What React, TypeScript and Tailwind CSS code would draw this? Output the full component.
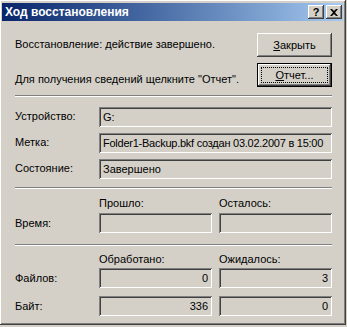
import React from 'react';

const raised =
  'shadow-[inset_-1px_-1px_#404040,inset_1px_1px_#ffffff,inset_-2px_-2px_#808080,inset_2px_2px_#d4d0c8]';
const sunken =
  'shadow-[inset_1px_1px_#808080,inset_-1px_-1px_#ffffff,inset_2px_2px_#404040,inset_-2px_-2px_#d4d0c8]';

const Field: React.FC<{ value?: string; right?: boolean; tight?: boolean }> = ({ value, right, tight }) => (
  <div
    className={`h-[20px] bg-[#d4d0c8] ${sunken} flex items-center px-[4px] leading-none whitespace-nowrap overflow-hidden ${
      right ? 'justify-end' : ''
    } ${tight ? 'tracking-[-0.25px]' : ''}`}
  >
    {value}
  </div>
);

const Separator: React.FC<{ className?: string }> = ({ className }) => (
  <div className={`h-[2px] border-t border-t-[#808080] border-b border-b-white ${className ?? ''}`} />
);

const TitleButton: React.FC<{ children: React.ReactNode }> = ({ children }) => (
  <div
    className={`w-[16px] h-[14px] bg-[#d4d0c8] ${raised} flex items-center justify-center text-black text-[11px] font-bold leading-none`}
  >
    {children}
  </div>
);

export default function App() {
  return (
    <div
      className="w-[347px] h-[327px] bg-[#d4d0c8] text-black text-[11px] overflow-hidden"
      style={{ fontFamily: '"Liberation Sans", Arial, sans-serif' }}
    >
      <div className={`w-[346px] h-[325px] pt-[3px] pl-[2px] pr-[3px] ${raised} flex flex-col`}>
        {/* Title bar */}
        <div className="h-[18px] bg-gradient-to-r from-[#0a246a] to-[#a6caf0] flex items-center justify-between pl-[3px] pr-[1px]">
          <span className="text-white font-bold text-[12px] leading-none">Ход восстановления</span>
          <div className="flex gap-[2px]">
            <TitleButton>?</TitleButton>
            <TitleButton>
              <svg width="8" height="7" viewBox="0 0 8 7">
                <path d="M0 0h2l2 2 2-2h2L5 3.5 8 7H6L4 5 2 7H0l3-3.5z" fill="#000" />
              </svg>
            </TitleButton>
          </div>
        </div>

        {/* Body */}
        <div className="pl-[13px] pr-[11px] flex flex-col">
          <div className="mt-[12px] grid grid-cols-[1fr_75px] grid-rows-[24px_24px] gap-y-[6px]">
            <div className="flex items-center pb-[2px]">Восстановление: действие завершено.</div>
            <button className={`h-[24px] bg-[#d4d0c8] ${raised} flex items-center justify-center`}>
              <span>
                <span className="underline">З</span>акрыть
              </span>
            </button>
            <div className="flex items-end">Для получения сведений щелкните "Отчет".</div>
            <button className="h-[24px] border border-black bg-[#d4d0c8]">
              <div className={`h-full w-full ${raised} flex items-center justify-center p-[3px]`}>
                <div className="w-full h-full border border-dotted border-black flex items-center justify-center">
                  <span>
                    <span className="underline">О</span>тчет...
                  </span>
                </div>
              </div>
            </button>
          </div>

          <Separator className="mt-[8px]" />

          <div className="mt-[10px] grid grid-cols-[84px_1fr] gap-y-[6px] items-center">
            <div className="-mt-[2px]">Устройство:</div>
            <Field value="G:" />
            <div className="-mt-[2px]">Метка:</div>
            <Field value="Folder1-Backup.bkf создан 03.02.2007 в 15:00" tight />
            <div className="-mt-[2px]">Состояние:</div>
            <Field value="Завершено" />
          </div>

          <Separator className="mt-[8px]" />

          <div className="mt-[7px] grid grid-cols-[84px_113px_120px] items-center">
            <div />
            <div className="h-[14px] leading-[14px]">Прошло:</div>
            <div className="h-[14px] leading-[14px] pl-[7px]">Осталось:</div>
            <div className="mt-[3px]">Время:</div>
            <div className="mt-[3px]">
              <Field />
            </div>
            <div className="mt-[3px] pl-[7px]">
              <Field />
            </div>
          </div>

          <Separator className="mt-[11px]" />

          <div className="mt-[6px] grid grid-cols-[84px_113px_120px] items-center">
            <div />
            <div className="h-[14px] leading-[14px]">Обработано:</div>
            <div className="h-[14px] leading-[14px] pl-[7px]">Ожидалось:</div>
            <div className="mt-[2px]">Файлов:</div>
            <div className="mt-[2px]">
              <Field value="0" right />
            </div>
            <div className="mt-[2px] pl-[7px]">
              <Field value="3" right />
            </div>
            <div className="mt-[8px]">Байт:</div>
            <div className="mt-[8px]">
              <Field value="336" right />
            </div>
            <div className="mt-[8px] pl-[7px]">
              <Field value="0" right />
            </div>
          </div>
        </div>
      </div>
    </div>
  );
}
